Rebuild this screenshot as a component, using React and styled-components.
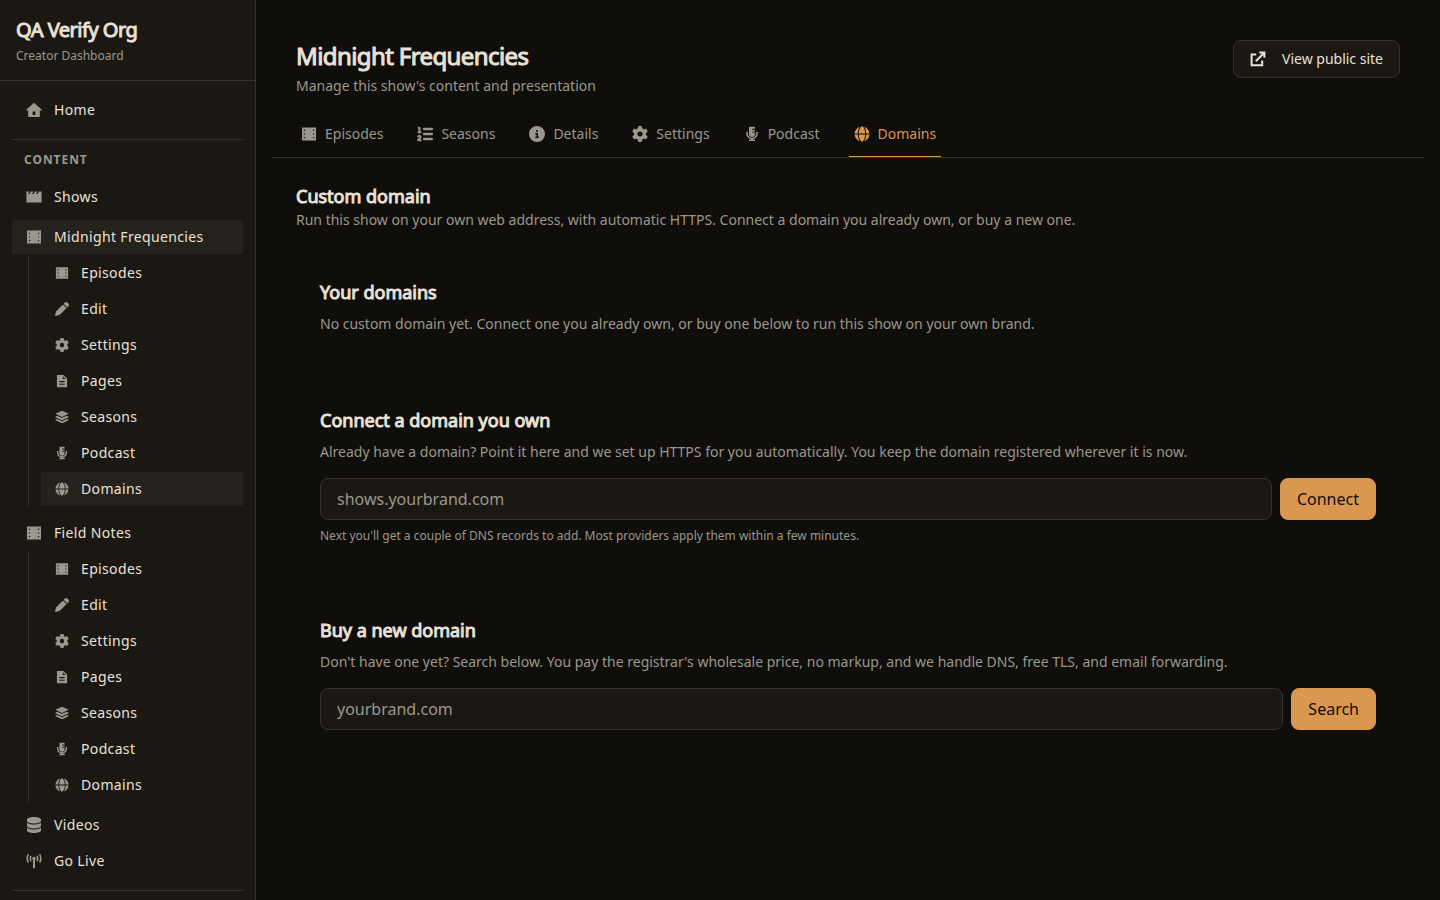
import styled, { createGlobalStyle } from 'styled-components';
import { FaCircleInfo, FaDatabase, FaGear, FaListOl, FaPen } from 'react-icons/fa6';

const HomeIcon = () => (
  <svg viewBox="0 0 16 16" fill="currentColor" aria-hidden="true">
    <path fillRule="evenodd" d="M8 .7 15.6 7.5V8.6H13.8V15H2.2V8.6H.4V7.5ZM6.6 9.4V13H9.4V9.4Z" />
  </svg>
);

const ClapperIcon = () => (
  <svg viewBox="0 0 16 16" fill="currentColor" aria-hidden="true">
    <path d="M.4 2.4H3.6L2 5H3.4L5 2.4H7.6L6 5H7.4L9 2.4H11.6L10 5H11.4L13 2.4H15.6V13.6H.4Z" />
  </svg>
);

const FilmIcon = () => (
  <svg viewBox="0 0 16 16" fill="currentColor" aria-hidden="true">
    <path
      fillRule="evenodd"
      d="M1 1.5H15V14.5H1ZM2.8 3.8V5H4.1V3.8ZM2.8 7.4V8.6H4.1V7.4ZM2.8 11V12.2H4.1V11ZM11.9 3.8V5H13.2V3.8ZM11.9 7.4V8.6H13.2V7.4ZM11.9 11V12.2H13.2V11Z"
    />
  </svg>
);

const PageIcon = () => (
  <svg viewBox="0 0 16 16" fill="currentColor" aria-hidden="true">
    <path
      fillRule="evenodd"
      d="M2.2 1H9.6L13.8 5.2V15H2.2ZM9 2.6V5.8H12.2ZM5 8V9.3H11V8ZM5 11V12.3H11V11Z"
    />
  </svg>
);

const LayersIcon = () => (
  <svg viewBox="0 0 16 16" fill="currentColor" aria-hidden="true">
    <path d="M8 .8 15.6 4.4 8 8 .4 4.4Z" />
    <path d="M.4 7.6 2.6 6.6 8 9.2 13.4 6.6 15.6 7.6V8.2L8 11.6.4 8.2Z" />
    <path d="M.4 11.2 2.6 10.2 8 12.8 13.4 10.2 15.6 11.2V11.8L8 15.2.4 11.8Z" />
  </svg>
);

const MicIcon = () => (
  <svg viewBox="0 0 16 16" fill="currentColor" aria-hidden="true">
    <path d="M5 .8H11V2.8H8.4V4H11V5.4H8.4V6.6H11V8A3 3 0 0 1 5 8Z" />
    <path d="M3 5.8V7.5A5 5 0 0 0 13 7.5V5.8" fill="none" stroke="currentColor" strokeWidth="1.6" />
    <path d="M7.1 12H8.9V13.5H11V15H5V13.5H7.1Z" />
  </svg>
);

const GlobeIcon = () => (
  <svg viewBox="0 0 16 16" fill="currentColor" aria-hidden="true">
    <path d="M5.9.7C3 1.5.8 4.2.5 7.4H3.8C3.9 4.6 4.7 2.2 5.9.7ZM10.1.7C13 1.5 15.2 4.2 15.5 7.4H12.2C12.1 4.6 11.3 2.2 10.1.7ZM5.9 15.3C3 14.5.8 11.8.5 8.6H3.8C3.9 11.4 4.7 13.8 5.9 15.3ZM10.1 15.3C13 14.5 15.2 11.8 15.5 8.6H12.2C12.1 11.4 11.3 13.8 10.1 15.3Z" />
    <path d="M7.2.6H8.8C10.3 2 11.1 4.6 11.2 7.4H4.8C4.9 4.6 5.7 2 7.2.6ZM7.2 15.4H8.8C10.3 14 11.1 11.4 11.2 8.6H4.8C4.9 11.4 5.7 14 7.2 15.4Z" />
  </svg>
);

const ListIcon = () => <FaListOl strokeWidth="14" />;

const BroadcastIcon = () => (
  <svg viewBox="0 0 16 16" fill="none" stroke="currentColor" strokeWidth="1.6" aria-hidden="true">
    <path d="M2.4 1.3A8 8 0 0 0 2.4 9.5M13.6 1.3A8 8 0 0 1 13.6 9.5M5.1 2.8A5 5 0 0 0 5.1 8M10.9 2.8A5 5 0 0 1 10.9 8" />
    <path d="M8 6V15.2" strokeWidth="2" />
    <circle cx="8" cy="5.4" r="1.7" fill="currentColor" stroke="none" />
  </svg>
);

const ExternalIcon = () => (
  <svg viewBox="0 0 16 16" fill="none" stroke="currentColor" strokeWidth="2" aria-hidden="true">
    <path d="M6.2 3.6H1.6V14.2H12.2V9.6M9.2 1.6H14.4V6.8M14.2 1.8 5.8 10.2" />
  </svg>
);

const showLinks = [
  { label: 'Episodes', icon: FilmIcon },
  { label: 'Edit', icon: FaPen },
  { label: 'Settings', icon: FaGear },
  { label: 'Pages', icon: PageIcon },
  { label: 'Seasons', icon: LayersIcon },
  { label: 'Podcast', icon: MicIcon },
  { label: 'Domains', icon: GlobeIcon },
];

const tabs = [
  { label: 'Episodes', icon: FilmIcon },
  { label: 'Seasons', icon: ListIcon },
  { label: 'Details', icon: FaCircleInfo },
  { label: 'Settings', icon: FaGear },
  { label: 'Podcast', icon: MicIcon },
  { label: 'Domains', icon: GlobeIcon },
];

const NavItem = ({ icon: Icon, label, active, small }) => (
  <NavLink href="#" $active={active} $small={small} aria-current={active ? 'page' : undefined}>
    <Icon />
    {label}
  </NavLink>
);

const ShowGroup = ({ name, active, activeLink }) => (
  <Group>
    <NavItem icon={FilmIcon} label={name} active={active} />
    <SubNav>
      {showLinks.map((link) => (
        <NavItem key={link.label} {...link} small active={link.label === activeLink} />
      ))}
    </SubNav>
  </Group>
);

const App = () => {
  return (
    <Page>
      <GlobalStyle />
      <Sidebar>
        <Brand>
          <BrandName>QA Verify Org</BrandName>
          <BrandNote>Creator Dashboard</BrandNote>
        </Brand>
        <Nav>
          <NavItem icon={HomeIcon} label="Home" />
          <Divider />
          <NavLabel>Content</NavLabel>
          <NavItem icon={ClapperIcon} label="Shows" />
          <ShowGroup name="Midnight Frequencies" active activeLink="Domains" />
          <ShowGroup name="Field Notes" />
          <NavItem icon={FaDatabase} label="Videos" />
          <NavItem icon={BroadcastIcon} label="Go Live" />
          <Divider />
        </Nav>
      </Sidebar>
      <Main>
        <Header>
          <div>
            <Title>Midnight Frequencies</Title>
            <Text>Manage this show's content and presentation</Text>
          </div>
          <SiteLink href="#">
            <ExternalIcon />
            View public site
          </SiteLink>
        </Header>
        <Tabs aria-label="Show sections">
          {tabs.map(({ label, icon: Icon }) => (
            <Tab key={label} href="#" $active={label === 'Domains'}>
              <Icon />
              {label}
            </Tab>
          ))}
        </Tabs>
        <Content>
          <Heading>Custom domain</Heading>
          <Text>
            Run this show on your own web address, with automatic HTTPS. Connect a domain you already own, or buy a new
            one.
          </Text>
          <Cards>
            <Card>
              <Heading>Your domains</Heading>
              <Text>
                No custom domain yet. Connect one you already own, or buy one below to run this show on your own brand.
              </Text>
            </Card>
            <Card>
              <Heading>Connect a domain you own</Heading>
              <Text>
                Already have a domain? Point it here and we set up HTTPS for you automatically. You keep the domain
                registered wherever it is now.
              </Text>
              <Form onSubmit={(e) => e.preventDefault()}>
                <Input type="text" placeholder="shows.yourbrand.com" aria-label="Domain you own" />
                <Button type="submit">Connect</Button>
              </Form>
              <Hint>Next you'll get a couple of DNS records to add. Most providers apply them within a few minutes.</Hint>
            </Card>
            <Card>
              <Heading>Buy a new domain</Heading>
              <Text>
                Don't have one yet? Search below. You pay the registrar's wholesale price, no markup, and we handle DNS,
                free TLS, and email forwarding.
              </Text>
              <Form onSubmit={(e) => e.preventDefault()}>
                <Input type="text" placeholder="yourbrand.com" aria-label="Domain to search for" />
                <Button type="submit">Search</Button>
              </Form>
            </Card>
          </Cards>
        </Content>
      </Main>
    </Page>
  );
};

export default App;

const GlobalStyle = createGlobalStyle`
  *, *::before, *::after {
    box-sizing: border-box;
  }

  body {
    margin: 0;
    background: #0f0e0a;
    color: #e9e1d7;
    font-family: 'Noto Sans', sans-serif;
    font-size: 14px;
    line-height: 20px;
  }

  h1, h2, p {
    margin: 0;
  }

  a {
    color: inherit;
    text-decoration: none;
  }
`;

const Page = styled.div`
  display: flex;
  height: 100vh;
  overflow: hidden;
`;

const Sidebar = styled.aside`
  flex: 0 0 256px;
  overflow: hidden;
  background: #1b1713;
  border-right: 1px solid #34322c;
`;

const Brand = styled.div`
  padding: 16px;
  border-bottom: 1px solid #34322c;
`;

const BrandName = styled.p`
  font-size: 20px;
  font-weight: 400;
  line-height: 28px;
  letter-spacing: -0.025em;
  -webkit-text-stroke: 1px currentColor;
`;

const BrandNote = styled.p`
  margin-top: 4px;
  color: #9b978c;
  font-size: 12px;
  line-height: 16px;
`;

const Nav = styled.nav`
  display: flex;
  flex-direction: column;
  gap: 2px;
  padding: 12px;
`;

const NavLink = styled.a`
  display: flex;
  align-items: center;
  gap: 12px;
  height: 34px;
  padding: 0 14px;
  background: ${({ $active }) => ($active ? '#25211c' : 'transparent')};
  letter-spacing: 0.025em;

  svg {
    flex: none;
    width: ${({ $small }) => ($small ? '14px' : '16px')};
    height: ${({ $small }) => ($small ? '14px' : '16px')};
    color: #9b978c;
  }
`;

const Divider = styled.hr`
  width: 100%;
  height: 1px;
  margin: 10px 0;
  border: 0;
  background: #34322c;
`;

const NavLabel = styled.p`
  padding: 0 12px 10px;
  color: #9b978c;
  font-size: 12px;
  font-weight: 700;
  line-height: 16px;
  letter-spacing: 0.08em;
  text-transform: uppercase;
`;

const Group = styled.div`
  display: flex;
  flex-direction: column;
  gap: 2px;
  margin: 4px 0;
`;

const SubNav = styled.div`
  display: flex;
  flex-direction: column;
  gap: 2px;
  margin-left: 16px;
  padding-left: 12px;
  border-left: 1px solid #34322c;
`;

const Main = styled.main`
  flex: 1;
  min-width: 0;
  padding: 40px 16px;
  overflow: auto;
`;

const Header = styled.header`
  display: flex;
  align-items: flex-start;
  justify-content: space-between;
  padding: 0 24px;
`;

const Title = styled.h1`
  margin-bottom: 4px;
  font-size: 24px;
  font-weight: 400;
  line-height: 32px;
  letter-spacing: -0.025em;
  -webkit-text-stroke: 1px currentColor;
`;

const Text = styled.p`
  color: #9b978c;
`;

const SiteLink = styled.a`
  display: flex;
  align-items: center;
  gap: 16px;
  padding: 8px 16px;
  background: #1b1713;
  border: 1px solid #34322c;
  border-radius: 8px;

  svg {
    width: 16px;
    height: 16px;
  }
`;

const Tabs = styled.nav`
  display: flex;
  gap: 24px;
  margin-top: 16px;
  padding: 0 24px;
  border-bottom: 1px solid #34322c;
`;

const Tab = styled.a`
  display: flex;
  align-items: center;
  gap: 8px;
  padding: 12px 5px;
  border-bottom: 1px solid ${({ $active }) => ($active ? '#d9974f' : 'transparent')};
  color: ${({ $active }) => ($active ? '#d9974f' : '#9b978c')};

  svg {
    width: 16px;
    height: 16px;
  }
`;

const Content = styled.section`
  padding: 24px;
`;

const Heading = styled.h2`
  font-size: 18px;
  font-weight: 400;
  line-height: 28px;
  -webkit-text-stroke: 1px currentColor;
`;

const Cards = styled.div`
  display: flex;
  flex-direction: column;
  gap: 24px;
  margin-top: 24px;
`;

const Card = styled.section`
  padding: 24px;

  ${Heading} {
    margin-bottom: 8px;
  }
`;

const Form = styled.form`
  display: flex;
  gap: 8px;
  margin-top: 16px;
`;

const Input = styled.input`
  flex: 1;
  min-width: 0;
  padding: 8px 16px;
  background: #1b1713;
  border: 1px solid #34322c;
  border-radius: 8px;
  color: inherit;
  font: inherit;
  font-size: 16px;
  line-height: 24px;

  &::placeholder {
    color: #9b978c;
    opacity: 1;
  }
`;

const Button = styled.button`
  padding: 8px 16px;
  background: #d9974f;
  border: 1px solid #d9974f;
  border-radius: 8px;
  color: #0f0e0a;
  font: inherit;
  font-size: 16px;
  line-height: 24px;
`;

const Hint = styled.p`
  margin-top: 8px;
  color: #9b978c;
  font-size: 12px;
  line-height: 16px;
`;
